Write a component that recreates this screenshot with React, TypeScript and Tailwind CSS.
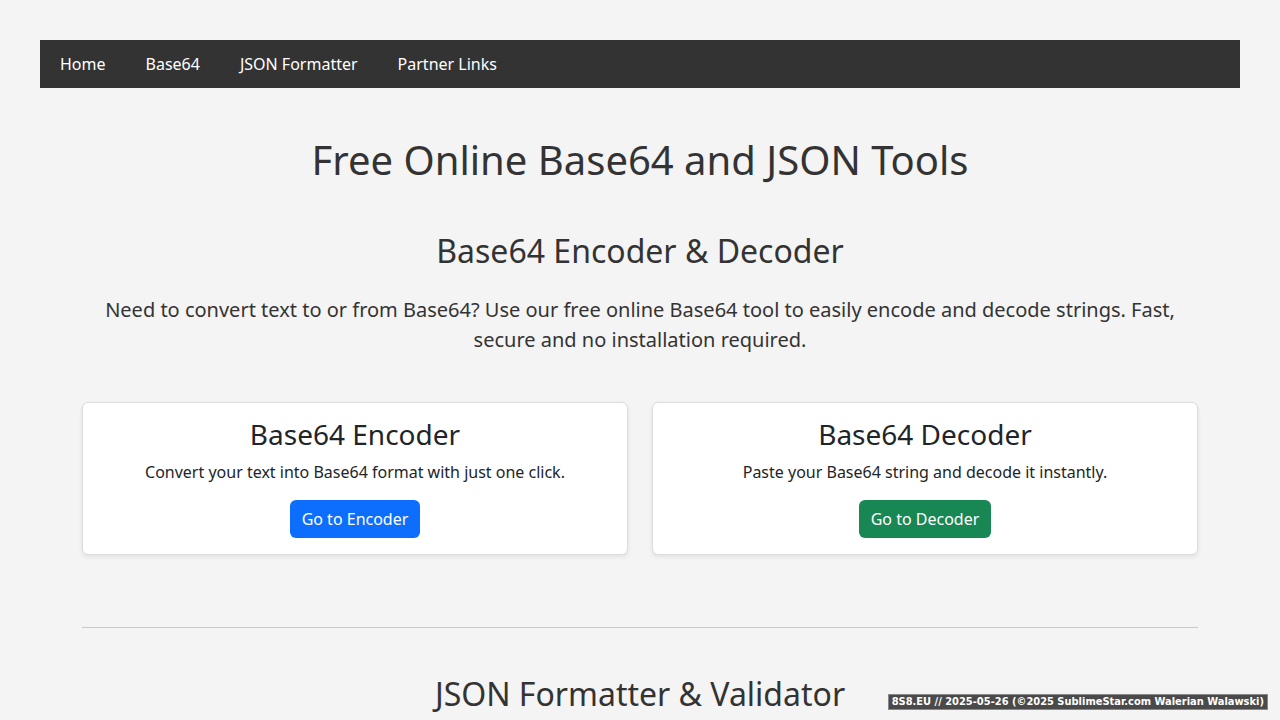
import React from "react";

const navLinks = ["Home", "Base64", "JSON Formatter", "Partner Links"];

function ToolCard({
  title,
  text,
  button,
  tone,
}: {
  title: string;
  text: string;
  button: string;
  tone: "blue" | "green";
}) {
  return (
    <div className="bg-white border border-[#dcdcdc] rounded-[6px] shadow-[0_2px_4px_rgba(0,0,0,0.08)] px-4 pt-[15px] pb-4 text-center text-[#212529]">
      <h3 className="text-[28px] leading-[1.2] mb-2">{title}</h3>
      <p className="text-base leading-6 mb-4">{text}</p>
      <a
        href="#"
        className={
          tone === "blue"
            ? "inline-block bg-[#0d6efd] text-white text-base leading-6 px-3 py-[7px] rounded-[6px]"
            : "inline-block bg-[#198754] text-white text-base leading-6 px-3 py-[7px] rounded-[6px]"
        }
      >
        {button}
      </a>
    </div>
  );
}

export default function App() {
  return (
    <div className="min-h-screen bg-[#f4f4f4] text-[#333] p-10 font-['Noto_Sans',sans-serif]">
      <nav className="bg-[#333] h-12 flex items-center px-5">
        <ul className="flex items-center gap-10">
          {navLinks.map((l) => (
            <li key={l}>
              <a href="#" className="text-white text-base">
                {l}
              </a>
            </li>
          ))}
        </ul>
      </nav>

      <main className="max-w-[1140px] mx-auto px-3 mt-12 text-center">
        <h1 className="text-[40px] leading-[1.2]">Free Online Base64 and JSON Tools</h1>

        <section className="mt-12">
          <h2 className="text-[32px] leading-[1.2]">Base64 Encoder &amp; Decoder</h2>
          <p className="text-xl leading-[30px] mt-[25px]">
            Need to convert text to or from Base64? Use our free online Base64 tool to easily encode
            and decode strings. Fast, secure and no installation required.
          </p>
          <div className="grid grid-cols-2 gap-6 mt-[47px]">
            <ToolCard
              title="Base64 Encoder"
              text="Convert your text into Base64 format with just one click."
              button="Go to Encoder"
              tone="blue"
            />
            <ToolCard
              title="Base64 Decoder"
              text="Paste your Base64 string and decode it instantly."
              button="Go to Decoder"
              tone="green"
            />
          </div>
        </section>

        <hr className="border-0 border-t border-[#c9c9c9] mt-[72px]" />

        <section className="mt-[47px]">
          <h2 className="text-[32px] leading-[1.2]">JSON Formatter &amp; Validator</h2>
        </section>
      </main>

      <div className="fixed right-[12px] bottom-[10px] bg-[#4a4a4a] border border-[#888] px-[3px] text-white text-[11px] leading-[14px] font-bold font-['DejaVu_Sans_Condensed','DejaVu_Sans',sans-serif]">
        8S8.EU // 2025-05-26 (©2025 SublimeStar.com Walerian Walawski)
      </div>
    </div>
  );
}
